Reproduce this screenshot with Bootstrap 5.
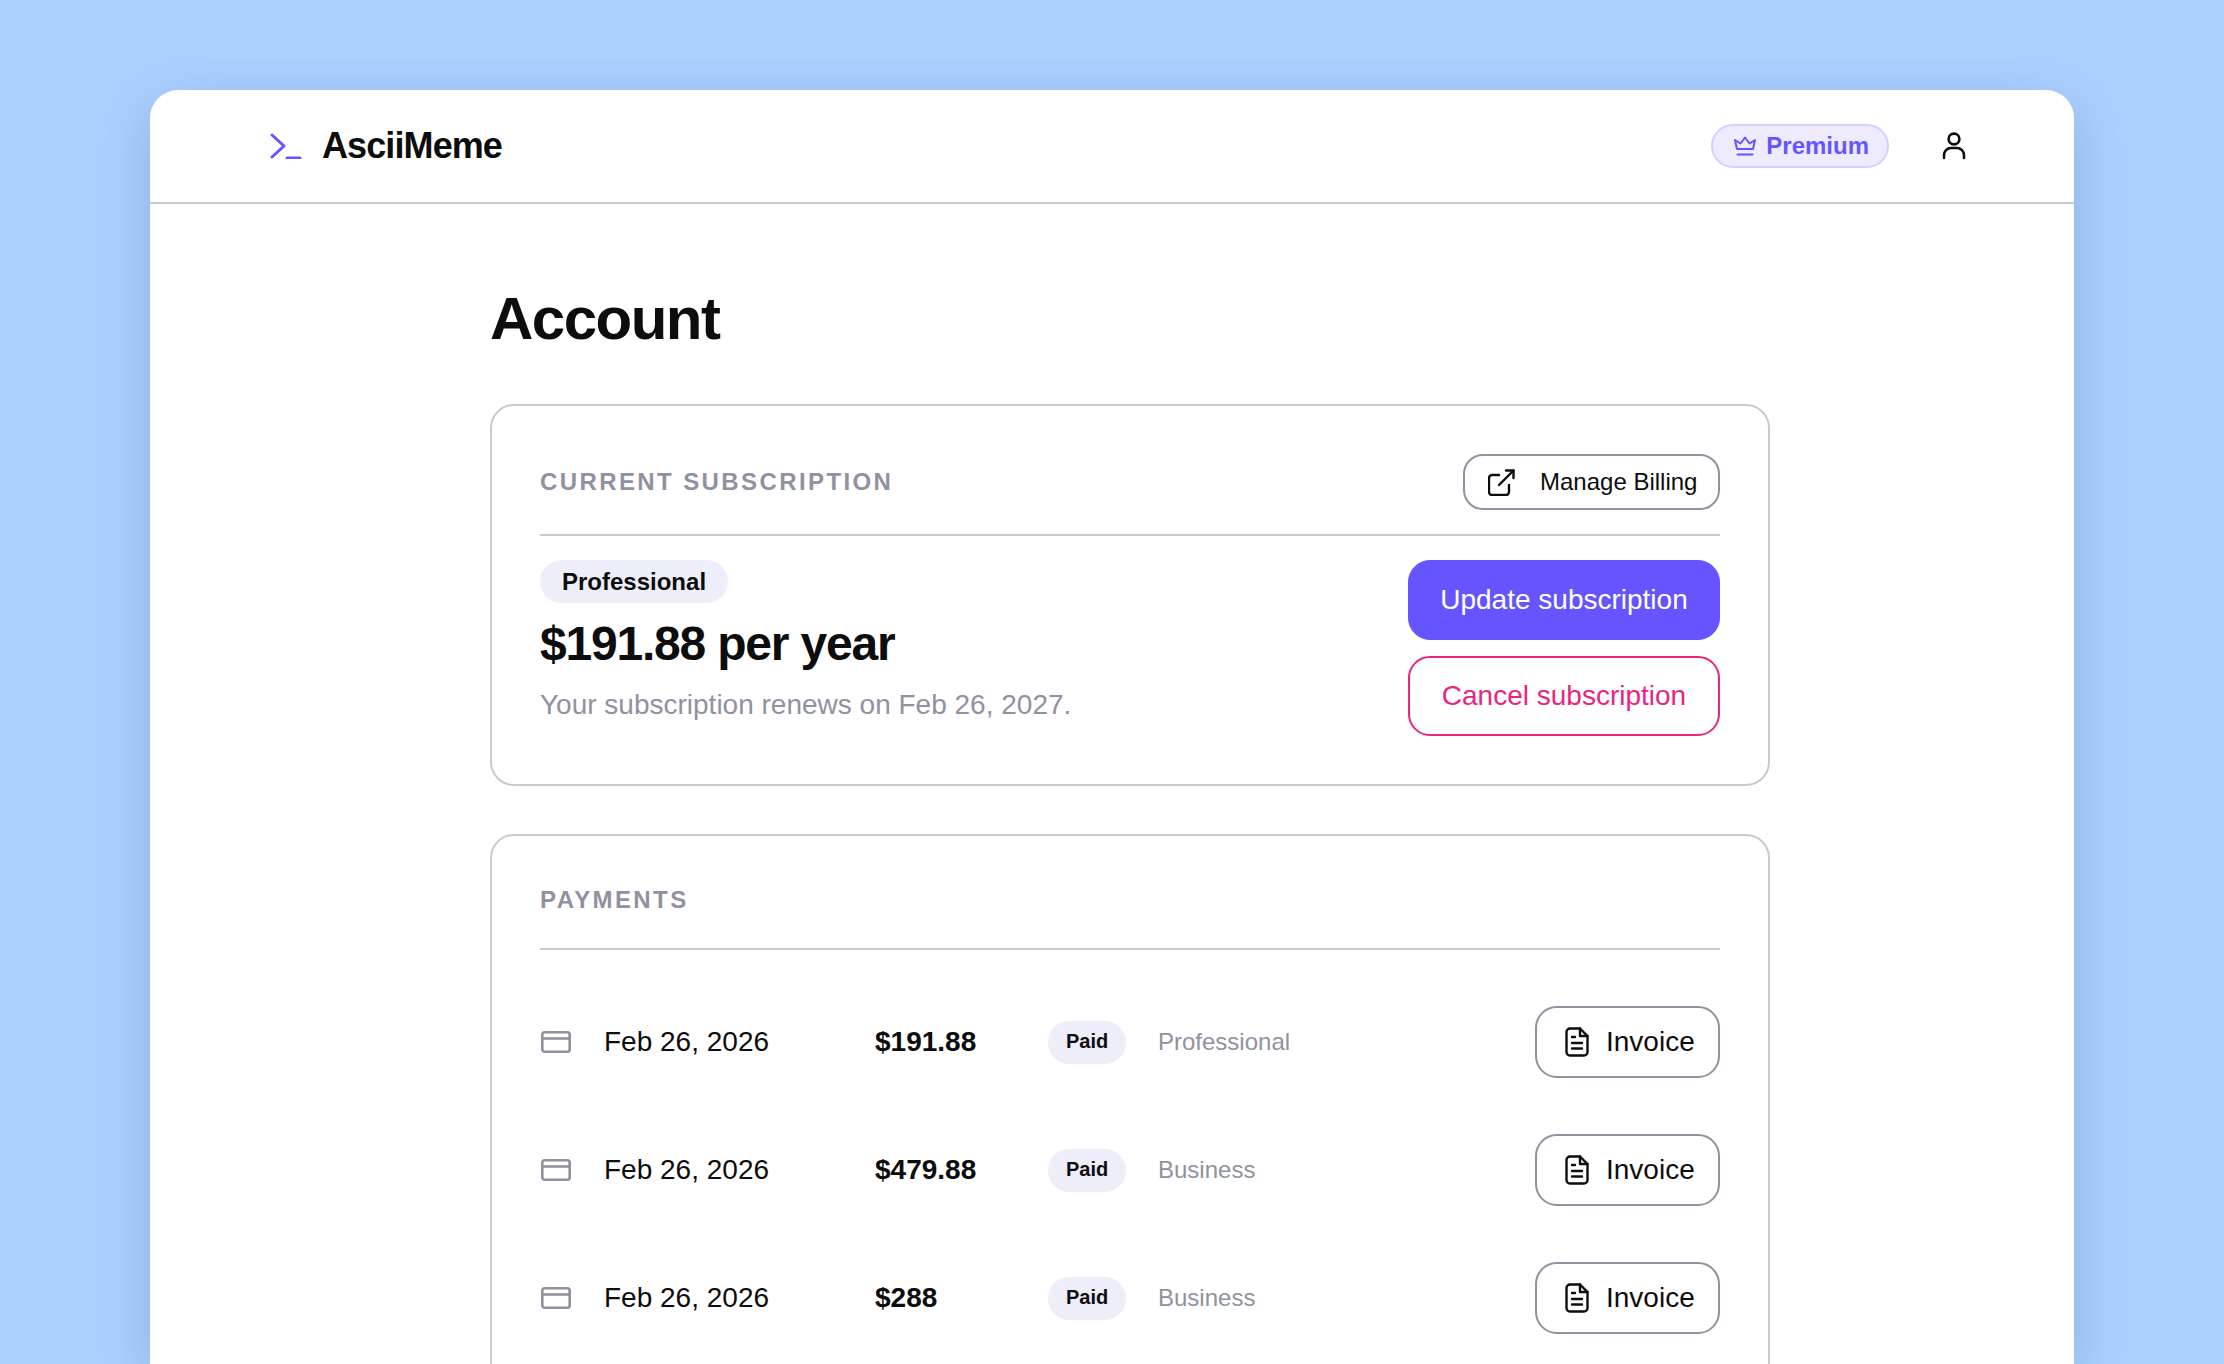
<!doctype html>
<html lang="en">
<head>
<meta charset="utf-8">
<title>AsciiMeme Account</title>
<link href="https://cdn.jsdelivr.net/npm/bootstrap@5.3.0/dist/css/bootstrap.min.css" rel="stylesheet">
<style>
html,body{height:100%;overflow:hidden}
body{background:#abd1ff;font-family:"Liberation Sans",Arial,sans-serif;color:#0d0d0d;padding:90px 150px 0}
.app-window{background:#fff;border-radius:28px 28px 0 0;height:1274px;overflow:hidden;box-shadow:0 16px 56px rgba(40,60,110,.22)}
.app-header{height:114px;padding:0 108px 0 120px;border-bottom:2px solid #c9c9d1}
.brand-name{font-size:36px;font-weight:700;letter-spacing:-.025em;line-height:1;margin-left:20px;color:#0d0d0d;padding:0}
.premium-pill{height:44px;padding:0 18px 0 20px;background:#eeebff;border:2px solid #d5cfff;color:#6655ff;font-size:24px;font-weight:700;gap:9px;border-radius:22px;margin-right:53px}
.app-main{padding:0 304px 0 340px}
.page-title{font-size:60px;font-weight:700;letter-spacing:-.025em;line-height:72px;margin:0;padding-top:79px;height:200px}
.panel{border:2px solid #c9c9d1;border-radius:24px;background:#fff;margin-bottom:48px}
.panel .card-body{padding:48px}
.panel-title{font-size:24px;font-weight:700;letter-spacing:.1em;color:#91919f;text-transform:uppercase;line-height:32px;margin:0}
.rule{height:2px;background:#c9c9d1;border:0;opacity:1;margin:24px 0}
.rule-wide{margin:32px 0 56px}
.btn-outline-soft{--bs-btn-color:#0d0d0d;--bs-btn-border-color:#91919f;--bs-btn-border-width:2px;--bs-btn-hover-color:#0d0d0d;--bs-btn-hover-bg:#f4f4f9;--bs-btn-hover-border-color:#91919f;--bs-btn-bg:#fff}
.btn-billing{height:56px;width:257px;font-size:24px;border-radius:20px;padding:0 0 0 23px;gap:25px}
.plan-pill{--bs-badge-padding-x:22px;--bs-badge-padding-y:0;--bs-badge-font-size:24px;--bs-badge-font-weight:700;--bs-badge-color:#0d0d0d;--bs-badge-border-radius:22px;background:#eeeefa;height:43px;line-height:43px}
.plan-price{font-size:48px;font-weight:700;letter-spacing:-.025em;line-height:56px;margin:13px 0 0}
.plan-note{font-size:28px;color:#91919f;line-height:36px;margin:15px 0 0}
.plan-actions{width:312px;gap:16px}
.btn-main{--bs-btn-bg:#6655ff;--bs-btn-border-color:#6655ff;--bs-btn-color:#fff;--bs-btn-hover-bg:#5a49f0;--bs-btn-hover-border-color:#5a49f0;--bs-btn-hover-color:#fff}
.btn-danger-line{--bs-btn-bg:#fff;--bs-btn-border-color:#e8267f;--bs-btn-color:#e8267f;--bs-btn-border-width:2px;--bs-btn-hover-bg:#fdeef5;--bs-btn-hover-border-color:#e8267f;--bs-btn-hover-color:#e8267f}
.btn-tall{height:80px;border-radius:22px;font-size:28px}
.pay-row{height:72px;margin-bottom:56px;font-size:28px}
.pay-icon{width:30px;height:22px;margin:0 33px 0 1px;flex:none}
.pay-date{width:271px}
.pay-amount{width:173px;font-weight:700}
.paid-pill{--bs-badge-padding-x:18px;--bs-badge-padding-y:0;--bs-badge-font-size:20px;--bs-badge-font-weight:700;--bs-badge-color:#0d0d0d;--bs-badge-border-radius:21px;background:#eeeefa;height:43px;line-height:41px;width:78px;margin-right:32px}
.pay-plan{font-size:24px;color:#91919f}
.btn-invoice{height:72px;width:185px;font-size:28px;border-radius:22px;gap:17px;padding:0 0 0 28px}
</style>
</head>
<body>
<div class="app-window">
  <nav class="navbar app-header d-flex align-items-center justify-content-between flex-nowrap">
    <a class="navbar-brand d-flex align-items-center m-0 p-0" href="#">
      <svg width="32" height="26" viewBox="0 0 32 26" fill="none" stroke="#6655ff" stroke-width="3" stroke-linecap="round" stroke-linejoin="round"><path d="M2 2l12 11L2 24"/><path d="M17 25h13"/></svg>
      <span class="brand-name">AsciiMeme</span>
    </a>
    <div class="d-flex align-items-center">
      <span class="premium-pill d-inline-flex align-items-center">
        <svg width="24" height="20" viewBox="0 0 24 20" fill="none" stroke="#6655ff" stroke-width="2" stroke-linecap="round" stroke-linejoin="round"><path d="M4 13L2 4l5.5 3.5L12 1.5l4.5 6L22 4l-2 9z"/><path d="M4.5 18.5h15"/></svg>
        <span>Premium</span>
      </span>
      <svg width="24" height="28" viewBox="0 0 24 28" fill="none" stroke="#0d0d0d" stroke-width="2.6" stroke-linecap="round"><circle cx="12" cy="7" r="5.4"/><path d="M2 26v-3a7 7 0 0 1 7-7h6a7 7 0 0 1 7 7v3"/></svg>
    </div>
  </nav>

  <main class="app-main">
    <h1 class="page-title">Account</h1>

    <section class="card panel">
      <div class="card-body">
        <div class="d-flex align-items-center justify-content-between">
          <h2 class="panel-title">Current Subscription</h2>
          <a href="#" class="btn btn-outline-soft btn-billing d-inline-flex align-items-center">
            <svg width="27" height="27" viewBox="0 0 27 27" fill="none" stroke="#0d0d0d" stroke-width="2.4" stroke-linecap="round" stroke-linejoin="round"><path d="M21 16v7a3 3 0 0 1-3 3H4a3 3 0 0 1-3-3V9a3 3 0 0 1 3-3h7"/><path d="M18 1.5h7.5V9"/><path d="M25.5 1.5L11 16"/></svg>
            <span>Manage Billing</span>
          </a>
        </div>
        <hr class="rule">
        <div class="d-flex justify-content-between">
          <div>
            <span class="badge plan-pill d-inline-block">Professional</span>
            <p class="plan-price">$191.88 per year</p>
            <p class="plan-note">Your subscription renews on Feb 26, 2027.</p>
          </div>
          <div class="plan-actions d-flex flex-column">
            <a href="#" class="btn btn-main btn-tall d-flex align-items-center justify-content-center">Update subscription</a>
            <a href="#" class="btn btn-danger-line btn-tall d-flex align-items-center justify-content-center">Cancel subscription</a>
          </div>
        </div>
      </div>
    </section>

    <section class="card panel">
      <div class="card-body">
        <h2 class="panel-title">Payments</h2>
        <hr class="rule rule-wide">

        <div class="pay-row d-flex align-items-center">
          <svg class="pay-icon" viewBox="0 0 30 22" fill="none" stroke="#91919f" stroke-width="2.6" stroke-linejoin="round"><rect x="1.3" y="1.3" width="27.4" height="19.4" rx="2.5"/><path d="M1.3 7.5h27.4"/></svg>
          <span class="pay-date">Feb 26, 2026</span>
          <span class="pay-amount">$191.88</span>
          <span class="badge paid-pill">Paid</span>
          <span class="pay-plan flex-grow-1">Professional</span>
          <a href="#" class="btn btn-outline-soft btn-invoice d-inline-flex align-items-center">
            <svg width="24" height="30" viewBox="0 0 24 30" fill="none" stroke="#0d0d0d" stroke-width="2.4" stroke-linecap="round" stroke-linejoin="round"><path d="M15 1.5H5a3.5 3.5 0 0 0-3.5 3.5v20A3.5 3.5 0 0 0 5 28.5h14a3.5 3.5 0 0 0 3.5-3.5V9z"/><path d="M15 1.5V9h7.5"/><path d="M7 10h3M7 16h10M7 21.5h10"/></svg>
            <span>Invoice</span>
          </a>
        </div>

        <div class="pay-row d-flex align-items-center">
          <svg class="pay-icon" viewBox="0 0 30 22" fill="none" stroke="#91919f" stroke-width="2.6" stroke-linejoin="round"><rect x="1.3" y="1.3" width="27.4" height="19.4" rx="2.5"/><path d="M1.3 7.5h27.4"/></svg>
          <span class="pay-date">Feb 26, 2026</span>
          <span class="pay-amount">$479.88</span>
          <span class="badge paid-pill">Paid</span>
          <span class="pay-plan flex-grow-1">Business</span>
          <a href="#" class="btn btn-outline-soft btn-invoice d-inline-flex align-items-center">
            <svg width="24" height="30" viewBox="0 0 24 30" fill="none" stroke="#0d0d0d" stroke-width="2.4" stroke-linecap="round" stroke-linejoin="round"><path d="M15 1.5H5a3.5 3.5 0 0 0-3.5 3.5v20A3.5 3.5 0 0 0 5 28.5h14a3.5 3.5 0 0 0 3.5-3.5V9z"/><path d="M15 1.5V9h7.5"/><path d="M7 10h3M7 16h10M7 21.5h10"/></svg>
            <span>Invoice</span>
          </a>
        </div>

        <div class="pay-row d-flex align-items-center">
          <svg class="pay-icon" viewBox="0 0 30 22" fill="none" stroke="#91919f" stroke-width="2.6" stroke-linejoin="round"><rect x="1.3" y="1.3" width="27.4" height="19.4" rx="2.5"/><path d="M1.3 7.5h27.4"/></svg>
          <span class="pay-date">Feb 26, 2026</span>
          <span class="pay-amount">$288</span>
          <span class="badge paid-pill">Paid</span>
          <span class="pay-plan flex-grow-1">Business</span>
          <a href="#" class="btn btn-outline-soft btn-invoice d-inline-flex align-items-center">
            <svg width="24" height="30" viewBox="0 0 24 30" fill="none" stroke="#0d0d0d" stroke-width="2.4" stroke-linecap="round" stroke-linejoin="round"><path d="M15 1.5H5a3.5 3.5 0 0 0-3.5 3.5v20A3.5 3.5 0 0 0 5 28.5h14a3.5 3.5 0 0 0 3.5-3.5V9z"/><path d="M15 1.5V9h7.5"/><path d="M7 10h3M7 16h10M7 21.5h10"/></svg>
            <span>Invoice</span>
          </a>
        </div>
      </div>
    </section>
  </main>
</div>
<script src="https://cdn.jsdelivr.net/npm/bootstrap@5.3.0/dist/js/bootstrap.bundle.min.js"></script>
</body>
</html>
